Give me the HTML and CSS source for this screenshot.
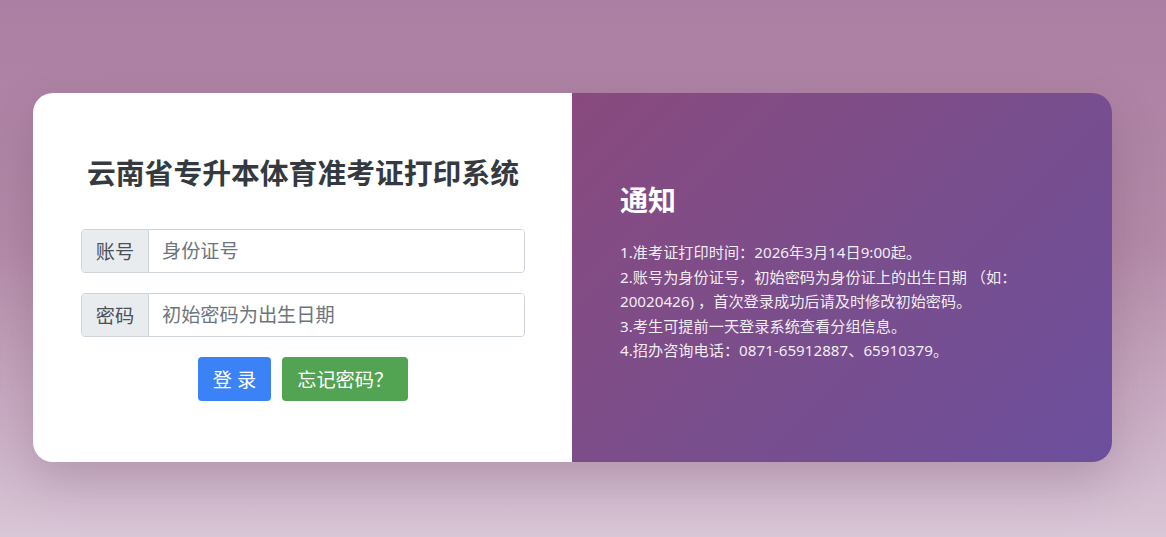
FILE: index.html
```html
<!DOCTYPE html>
<html>
<head>
  <meta charset="UTF-8">
  <title>云南省专升本体育准考证打印系统</title>
  <link rel="stylesheet" href="styles.css">
</head>
<body>
  <div class="page">
    <div class="login-card">
      <div class="login-left">
        <h3 class="login-title">云南省专升本体育准考证打印系统</h3>

        <div class="input-group">
          <span class="input-label">账号</span>
          <input class="input-field" type="text" placeholder="身份证号">
        </div>

        <div class="input-group">
          <span class="input-label">密码</span>
          <input class="input-field" type="password" placeholder="初始密码为出生日期">
        </div>

        <div class="btn-row">
          <button class="btn btn-login">登 录</button>
          <button class="btn btn-forget">忘记密码？</button>
        </div>
      </div>

      <div class="login-right">
        <h2 class="notice-title">通知</h2>
        <div class="notice-text">
          <p>1.准考证打印时间：2026年3月14日9:00起。</p>
          <p>2.账号为身份证号，初始密码为身份证上的出生日期 （如：20020426) ，首次登录成功后请及时修改初始密码。</p>
          <p>3.考生可提前一天登录系统查看分组信息。</p>
          <p>4.招办咨询电话：0871-65912887、65910379。</p>
        </div>
      </div>
    </div>
  </div>
</body>
</html>
```

FILE: styles.css
```css
:root {
  --bg-top: #ab7fa3;
  --bg-bottom: #d9c6d7;
  --panel-start: #894a7e;
  --panel-end: #6c4f9d;
  --text-dark: #343a40;
  --border: #ced4da;
}

* {
  margin: 0;
  padding: 0;
  box-sizing: border-box;
}

body {
  height: 100vh;
  background: linear-gradient(180deg, var(--bg-top) 0%, #b38aa8 45%, var(--bg-bottom) 100%);
  font-family: "Noto Sans", "Noto Sans CJK SC", sans-serif;
  overflow: hidden;
}

.page {
  padding: 93px 0 0 33px;
}

.login-card {
  width: 1079px;
  height: 369px;
  display: flex;
  border-radius: 20px;
  overflow: hidden;
  box-shadow: 0 20px 50px rgba(80, 40, 70, 0.22);
}

.login-left {
  flex: 0 0 539px;
  background: #fff;
  padding: 0 47px 0 48px;
  display: flex;
  flex-direction: column;
  justify-content: center;
}

.login-title {
  font-size: 28.8px;
  font-weight: 700;
  color: var(--text-dark);
  text-align: center;
  line-height: 1.2;
  margin-bottom: 38px;
  margin-top: 2px;
}

.input-group {
  display: flex;
  height: 44px;
  margin-bottom: 20px;
  border: 1px solid var(--border);
  border-radius: 4px;
  overflow: hidden;
}

.input-label {
  flex: 0 0 67px;
  display: flex;
  align-items: center;
  justify-content: center;
  background: #e9ecef;
  border-right: 1px solid var(--border);
  color: #495057;
  font-size: 19.2px;
}

.input-field {
  flex: 1;
  border: none;
  outline: none;
  padding: 0 13px;
  font-family: inherit;
  font-size: 19.2px;
  color: #495057;
}

.input-field::placeholder {
  color: #6c757d;
}

.btn-row {
  display: flex;
  justify-content: center;
  gap: 11px;
}

.btn {
  height: 44px;
  padding: 0 15px;
  border: none;
  border-radius: 4px;
  color: #fff;
  font-family: inherit;
  font-size: 19.2px;
  cursor: pointer;
}

.btn-login {
  background: #3b82f6;
}

.btn-forget {
  background: #52a352;
}

.login-right {
  flex: 1;
  background: linear-gradient(135deg, var(--panel-start) 0%, #7a4e8c 50%, var(--panel-end) 100%);
  color: #fff;
  padding: 0 48px;
  display: flex;
  flex-direction: column;
  justify-content: center;
}

.notice-title {
  font-size: 28px;
  font-weight: 700;
  line-height: 1.2;
  margin-bottom: 22px;
}

.notice-text {
  font-size: 15.2px;
  line-height: 24.5px;
  color: rgba(255, 255, 255, 0.92);
  margin-bottom: 8px;
}
```
